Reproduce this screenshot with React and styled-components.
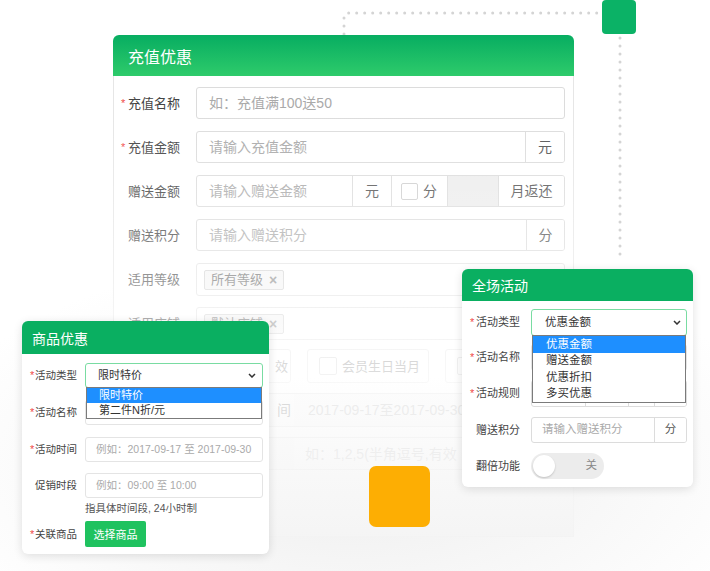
import styled, { createGlobalStyle } from "styled-components";

const GlobalStyle = createGlobalStyle`
  html, body {
    margin: 0;
    padding: 0;
    background: #fff;
  }
  body {
    font-family: "Liberation Sans", "Noto Sans CJK SC", sans-serif;
  }
  * {
    box-sizing: border-box;
  }
`;

const Stage = styled.div`
  position: relative;
  width: 710px;
  height: 571px;
  overflow: hidden;
  padding: 35px 0 0 113px;
  background:
    radial-gradient(ellipse 440px 220px at 355px 470px, #eeeeee 0%, rgba(255, 255, 255, 0) 100%),
    #fff;
`;

const Connectors = styled.svg`
  position: absolute;
  left: 0;
  top: 0;
  width: 710px;
  height: 571px;
  pointer-events: none;
`;

const GreenBlock = styled.div`
  position: absolute;
  left: 602px;
  top: 0;
  width: 34px;
  height: 34px;
  border-radius: 4px;
  background: #0bb266;
`;

const OrangeBlock = styled.div`
  position: absolute;
  left: 369px;
  top: 466px;
  width: 61px;
  height: 61px;
  border-radius: 7px;
  background: #fdae03;
`;

/* ---------- main card: 充值优惠 ---------- */

const MainCard = styled.section`
  position: relative;
  width: 461px;
  height: 502px;
  border-radius: 6px 6px 0 0;
  background: #fff;
`;

const MainHeader = styled.header`
  height: 41px;
  padding-left: 15px;
  display: flex;
  align-items: center;
  border-radius: 6px 6px 0 0;
  background: linear-gradient(180deg, #07ad61 0%, #2ecb6b 100%);
  color: #fff;
  font-size: 16px;
`;

const MainBody = styled.div`
  height: 461px;
  border: 1px solid #e6e6e6;
  border-top: none;
  padding: 0 8px 0 7px;
  display: flex;
  flex-direction: column;
`;

const Fade = styled.div`
  position: absolute;
  inset: 0;
  pointer-events: none;
  background: linear-gradient(
    180deg,
    rgba(255, 255, 255, 0) 0%,
    rgba(255, 255, 255, 0) 15%,
    rgba(255, 255, 255, 0.3) 40%,
    rgba(255, 255, 255, 0.55) 55%,
    rgba(255, 255, 255, 0.76) 68%,
    rgba(248, 248, 248, 0.88) 85%,
    rgba(244, 244, 244, 0.94) 100%
  );
`;

const MainRow = styled.div`
  display: flex;
  align-items: center;
  height: ${(p) => p.$h ?? 32}px;
  margin-top: ${(p) => p.$mt ?? 12}px;
  flex: none;
`;

const Label = styled.div`
  width: ${(p) => p.$w}px;
  flex: none;
  display: flex;
  align-items: center;
  font-size: ${(p) => p.$size}px;
  line-height: 1;
  color: #444;
  white-space: nowrap;
`;

const Star = styled.span`
  width: ${(p) => p.$w}px;
  flex: none;
  color: #f04848;
  font-size: 11px;
`;

const Input = styled.div`
  flex: 1;
  height: 100%;
  display: flex;
  align-items: center;
  padding-left: ${(p) => p.$pad ?? 12}px;
  border: 1px solid ${(p) => p.$border || "#dcdcdc"};
  border-radius: 3px;
  color: #aaa;
  font-size: ${(p) => p.$size ?? 14}px;
  line-height: 1;
  white-space: nowrap;
  overflow: hidden;
`;

const Group = styled.div`
  flex: 1;
  height: 100%;
  display: flex;
  border: 1px solid #dcdcdc;
  border-radius: 3px;
  overflow: hidden;
  font-size: ${(p) => p.$size ?? 14}px;
  line-height: 1;
`;

const Cell = styled.div`
  flex: 1;
  display: flex;
  align-items: center;
  padding-left: ${(p) => p.$pad ?? 12}px;
  color: #aaa;
  white-space: nowrap;
  overflow: hidden;
  background: ${(p) => p.$bg || "transparent"};
`;

const Addon = styled.div`
  width: ${(p) => p.$w}px;
  flex: none;
  display: flex;
  align-items: center;
  justify-content: ${(p) => p.$align || "center"};
  padding: 0 ${(p) => p.$padX ?? 0}px;
  gap: 5px;
  border-left: ${(p) => (p.$first ? "none" : "1px solid #dcdcdc")};
  background: ${(p) => p.$bg || "#fff"};
  color: #555;
  white-space: nowrap;
`;

const CheckBox = styled.span`
  width: ${(p) => p.$s ?? 17}px;
  height: ${(p) => p.$s ?? 17}px;
  flex: none;
  border: 1px solid #cfcfcf;
  border-radius: 2px;
  background: #fff;
`;

const TagBox = styled.div`
  flex: 1;
  height: 100%;
  display: flex;
  align-items: center;
  padding-left: 7px;
  border: 1px solid #e2e2e2;
  border-radius: 3px;
`;

const Tag = styled.span`
  height: 20px;
  display: inline-flex;
  align-items: center;
  gap: 6px;
  padding: 0 6px;
  border: 1px solid #d2d2d2;
  border-radius: 2px;
  background: #f4f4f4;
  color: #666;
  font-size: 13px;
  line-height: 1;
`;

const TagClose = styled.span`
  color: #888;
  font-size: 14px;
  font-weight: bold;
`;

const Options = styled.div`
  flex: 1;
  height: 100%;
  display: flex;
  gap: 16px;
`;

const OptionBox = styled.div`
  width: ${(p) => p.$w}px;
  flex: none;
  display: flex;
  align-items: center;
  justify-content: ${(p) => (p.$end ? "flex-end" : "flex-start")};
  gap: 5px;
  padding: 0 ${(p) => (p.$end ? 2 : 0)}px 0 ${(p) => (p.$end ? 0 : 11)}px;
  border: 1px solid #e2e2e2;
  border-radius: 3px;
  color: #777;
  font-size: 13px;
  line-height: 1;
  white-space: nowrap;
`;

/* ---------- floating cards ---------- */

const FloatCard = styled.section`
  position: absolute;
  left: ${(p) => p.$x}px;
  top: ${(p) => p.$y}px;
  width: ${(p) => p.$w}px;
  border-radius: 6px;
  background: #fff;
  box-shadow: 0 2px 10px rgba(0, 0, 0, 0.12);
`;

const FloatHeader = styled.header`
  height: ${(p) => p.$h}px;
  padding-left: 10px;
  display: flex;
  align-items: center;
  border-radius: 6px 6px 0 0;
  background: #0aaf61;
  color: #fff;
  font-size: 14px;
`;

const FloatBody = styled.div`
  padding: ${(p) => p.$pad};
  display: flex;
  flex-direction: column;
`;

const FloatRow = styled.div`
  position: relative;
  display: flex;
  align-items: center;
  height: ${(p) => p.$h}px;
  margin-top: ${(p) => p.$mt ?? 0}px;
  flex: none;
`;

const SelectBox = styled.div`
  position: relative;
  flex: 1;
  height: 100%;
  display: flex;
  align-items: center;
  justify-content: space-between;
  padding: 0 ${(p) => p.$padR}px 0 ${(p) => p.$padL}px;
  border: 1px solid #79dca2;
  border-radius: 3px;
  color: #333;
  font-size: ${(p) => p.$size}px;
  line-height: 1;
`;

const DropList = styled.ul`
  position: absolute;
  left: 0;
  right: 0;
  top: 100%;
  margin: 0;
  padding: 0;
  list-style: none;
  border: 1px solid #7b7b7b;
  background: #fff;
  z-index: 2;
`;

const DropItem = styled.li`
  height: ${(p) => p.$h}px;
  display: flex;
  align-items: center;
  padding-left: ${(p) => p.$pad}px;
  font-size: ${(p) => p.$size}px;
  line-height: 1;
  color: ${(p) => (p.$active ? "#fff" : "#333")};
  background: ${(p) => (p.$active ? "#1e8fff" : "#fff")};
`;

const Hint = styled.div`
  margin: 4px 0 0 55px;
  font-size: 10.5px;
  line-height: 12px;
  color: #555;
`;

const GreenButton = styled.span`
  width: 61px;
  height: 26px;
  display: flex;
  align-items: center;
  justify-content: center;
  border-radius: 2px;
  background: #1fc25f;
  color: #fff;
  font-size: 11px;
`;

const Toggle = styled.div`
  width: 73px;
  height: 26px;
  display: flex;
  align-items: center;
  justify-content: space-between;
  padding: 0 7px 0 2px;
  border-radius: 13px;
  background: #ececec;
`;

const Knob = styled.span`
  width: 22px;
  height: 22px;
  border-radius: 50%;
  background: #fff;
  box-shadow: 0 1px 2px rgba(0, 0, 0, 0.18);
`;

const ToggleText = styled.span`
  font-size: 11.5px;
  line-height: 1;
  color: #888;
`;

const Chevron = () => (
  <svg width="8" height="5" viewBox="0 0 8 5">
    <polyline points="1,1 4,4 7,1" fill="none" stroke="#333" strokeWidth="1.5" />
  </svg>
);

const MainLabel = ({ star, children }) => (
  <Label $w={75} $size={13}>
    <Star $w={7}>{star ? "*" : ""}</Star>
    {children}
  </Label>
);

const GoodsLabel = ({ star, children }) => (
  <Label $w={55} $size={10.5}>
    <Star $w={5}>{star ? "*" : ""}</Star>
    {children}
  </Label>
);

const EventLabel = ({ star, children }) => (
  <Label $w={61} $size={11}>
    <Star $w={6}>{star ? "*" : ""}</Star>
    {children}
  </Label>
);

const App = () => {
  return (
    <Stage>
      <GlobalStyle />
      <Connectors viewBox="0 0 710 571">
        <path
          d="M344 34 V17 Q344 13 348 13 H600 M620 38 V258"
          fill="none"
          stroke="#d4d4d4"
          strokeWidth="3"
          strokeLinecap="round"
          strokeDasharray="0 8"
        />
      </Connectors>
      <GreenBlock />

      <MainCard>
        <MainHeader>充值优惠</MainHeader>
        <MainBody>
          <MainRow $mt={11}>
            <MainLabel star>充值名称</MainLabel>
            <Input>如：充值满100送50</Input>
          </MainRow>
          <MainRow>
            <MainLabel star>充值金额</MainLabel>
            <Group>
              <Cell>请输入充值金额</Cell>
              <Addon $w={39}>元</Addon>
            </Group>
          </MainRow>
          <MainRow>
            <MainLabel>赠送金额</MainLabel>
            <Group>
              <Cell>请输入赠送金额</Cell>
              <Addon $w={39}>元</Addon>
              <Addon $w={56} $align="flex-start" $padX={9}>
                <CheckBox />
                分
              </Addon>
              <Addon $w={51} $bg="#ededed" />
              <Addon $w={66}>月返还</Addon>
            </Group>
          </MainRow>
          <MainRow>
            <MainLabel>赠送积分</MainLabel>
            <Group>
              <Cell>请输入赠送积分</Cell>
              <Addon $w={38}>分</Addon>
            </Group>
          </MainRow>
          <MainRow $h={33}>
            <MainLabel>适用等级</MainLabel>
            <TagBox>
              <Tag>
                所有等级<TagClose>×</TagClose>
              </Tag>
            </TagBox>
          </MainRow>
          <MainRow $h={33} $mt={11}>
            <MainLabel>适用店铺</MainLabel>
            <TagBox>
              <Tag>
                默认店铺<TagClose>×</TagClose>
              </Tag>
            </TagBox>
          </MainRow>
          {/* rows below are mostly hidden behind the floating cards */}
          <MainRow $h={34} $mt={9}>
            <MainLabel />
            <Options>
              <OptionBox $w={95} $end>
                效
              </OptionBox>
              <OptionBox $w={122}>
                <CheckBox $s={18} />
                会员生日当月
              </OptionBox>
              <OptionBox $w={120}>
                <CheckBox $s={18} />
              </OptionBox>
            </Options>
          </MainRow>
          <MainRow $h={34} $mt={10}>
            <MainLabel />
            <Group>
              <Addon $w={97} $first $align="flex-end" $padX={3} $bg="#fafafa">
                间
              </Addon>
              <Cell $pad={14} $bg="#f6f6f6">
                2017-09-17至2017-09-30
              </Cell>
            </Group>
          </MainRow>
          <MainRow $h={33} $mt={10}>
            <MainLabel />
            <Group>
              <Addon $w={97} $first $bg="#fafafa" />
              <Cell $pad={11}>如：1,2,5(半角逗号,有效</Cell>
            </Group>
          </MainRow>
        </MainBody>
        <Fade />
      </MainCard>

      <OrangeBlock />

      {/* 商品优惠 */}
      <FloatCard $x={22} $y={321} $w={247}>
        <FloatHeader $h={33}>商品优惠</FloatHeader>
        <FloatBody $pad="9px 6px 7px 8px">
          <FloatRow $h={25}>
            <GoodsLabel star>活动类型</GoodsLabel>
            <SelectBox $padL={12} $padR={6} $size={11}>
              限时特价
              <Chevron />
              <DropList>
                <DropItem $h={15} $pad={12} $size={11} $active>
                  限时特价
                </DropItem>
                <DropItem $h={15} $pad={12} $size={11}>
                  第二件N折/元
                </DropItem>
              </DropList>
            </SelectBox>
          </FloatRow>
          <FloatRow $h={25} $mt={12}>
            <GoodsLabel star>活动名称</GoodsLabel>
            <Input $size={10.5} $pad={10} $border="#e4e4e4" />
          </FloatRow>
          <FloatRow $h={25} $mt={12}>
            <GoodsLabel star>活动时间</GoodsLabel>
            <Input $size={10.5} $pad={10} $border="#e4e4e4">
              例如：2017-09-17 至 2017-09-30
            </Input>
          </FloatRow>
          <FloatRow $h={25} $mt={11}>
            <GoodsLabel>促销时段</GoodsLabel>
            <Input $size={10.5} $pad={10} $border="#e4e4e4">
              例如：09:00 至 10:00
            </Input>
          </FloatRow>
          <Hint>指具体时间段, 24小时制</Hint>
          <FloatRow $h={26} $mt={7}>
            <GoodsLabel star>关联商品</GoodsLabel>
            <GreenButton>选择商品</GreenButton>
          </FloatRow>
        </FloatBody>
      </FloatCard>

      {/* 全场活动 */}
      <FloatCard $x={462} $y={269} $w={231}>
        <FloatHeader $h={32}>全场活动</FloatHeader>
        <FloatBody $pad="8px 6px 8px 8px">
          <FloatRow $h={27}>
            <EventLabel star>活动类型</EventLabel>
            <SelectBox $padL={13} $padR={5} $size={11.5}>
              优惠金额
              <Chevron />
              <DropList>
                <DropItem $h={16.5} $pad={13} $size={11.5} $active>
                  优惠金额
                </DropItem>
                <DropItem $h={16.5} $pad={13} $size={11.5}>
                  赠送金额
                </DropItem>
                <DropItem $h={16.5} $pad={13} $size={11.5}>
                  优惠折扣
                </DropItem>
                <DropItem $h={16.5} $pad={13} $size={11.5}>
                  多买优惠
                </DropItem>
              </DropList>
            </SelectBox>
          </FloatRow>
          <FloatRow $h={27} $mt={8}>
            <EventLabel star>活动名称</EventLabel>
            <Input $size={11.5} $pad={10} $border="#e4e4e4" />
          </FloatRow>
          <FloatRow $h={27} $mt={9}>
            <EventLabel star>活动规则</EventLabel>
            <Group $size={11.5}>
              <Cell />
              <Addon $w={43} />
              <Addon $w={26} />
              <Addon $w={32} />
            </Group>
          </FloatRow>
          <FloatRow $h={26} $mt={10}>
            <EventLabel>赠送积分</EventLabel>
            <Group $size={11.5}>
              <Cell $pad={10}>请输入赠送积分</Cell>
              <Addon $w={32}>分</Addon>
            </Group>
          </FloatRow>
          <FloatRow $h={26} $mt={10}>
            <EventLabel>翻倍功能</EventLabel>
            <Toggle>
              <Knob />
              <ToggleText>关</ToggleText>
            </Toggle>
          </FloatRow>
        </FloatBody>
      </FloatCard>
    </Stage>
  );
};

export default App;
